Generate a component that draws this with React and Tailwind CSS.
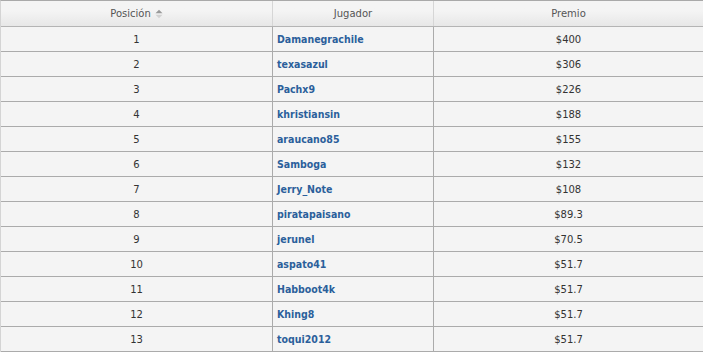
const rows = [
  [1, 'Damanegrachile', '$400'],
  [2, 'texasazul', '$306'],
  [3, 'Pachx9', '$226'],
  [4, 'khristiansin', '$188'],
  [5, 'araucano85', '$155'],
  [6, 'Samboga', '$132'],
  [7, 'Jerry_Note', '$108'],
  [8, 'piratapaisano', '$89.3'],
  [9, 'jerunel', '$70.5'],
  [10, 'aspato41', '$51.7'],
  [11, 'Habboot4k', '$51.7'],
  [12, 'Khing8', '$51.7'],
  [13, 'toqui2012', '$51.7'],
];

const SortIcon = () => (
  <svg width="8" height="10" viewBox="0 0 8 10" className="ml-[4px]">
    <path d="M0.5 4.2 L4 0.8 L7.5 4.2 Z" fill="#9a9a9a" />
    <path d="M0.5 5.8 L4 9.2 L7.5 5.8 Z" fill="#d2d2d2" />
  </svg>
);

export default function App() {
  return (
    <div className="w-[703px] h-[352px] bg-white text-[10px] font-['DejaVu_Sans',Verdana,sans-serif] text-[#333]">
      <div className="border-t border-l border-t-[#a9a9a9] border-l-[#d4d4d4]">
        <div className="grid grid-cols-[272px_161px_1fr] h-[26px] bg-gradient-to-b from-[#f4f4f4] from-40% to-[#e7e7e7] border-b border-[#b4b4b4] text-[#555]">
          <div className="flex items-center justify-center border-r border-[#d6d6d6]">
            Posición
            <SortIcon />
          </div>
          <div className="flex items-center justify-center border-r border-[#d6d6d6]">Jugador</div>
          <div className="flex items-center justify-center">Premio</div>
        </div>
        {rows.map(([pos, name, prize]) => (
          <div
            key={pos}
            className="grid grid-cols-[272px_161px_1fr] h-[25px] bg-[#f4f4f4] border-b border-[#ababab]"
          >
            <div className="flex items-center justify-center border-r border-[#ababab]">{pos}</div>
            <div className="flex items-center pl-[4px] pt-px border-r border-[#ababab] font-bold text-[10.5px] font-['DejaVu_Sans_Condensed','Liberation_Sans',sans-serif] text-[#2b5f9b]">{name}</div>
            <div className="flex items-center justify-center">{prize}</div>
          </div>
        ))}
      </div>
    </div>
  );
}
